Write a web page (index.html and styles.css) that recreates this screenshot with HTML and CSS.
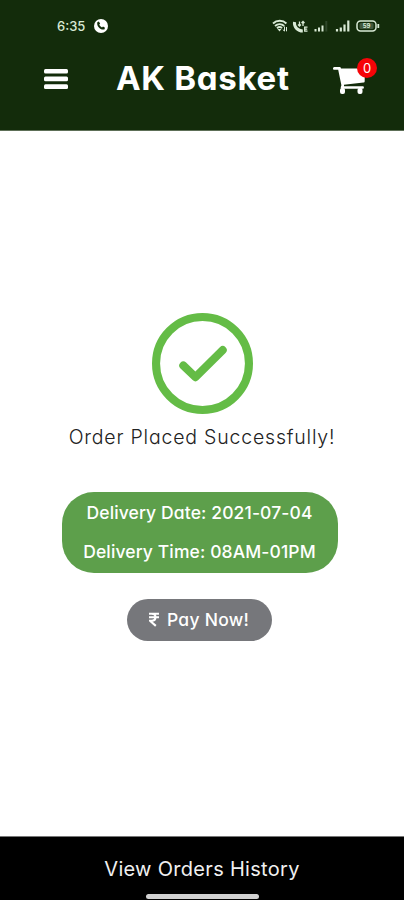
FILE: index.html
```
<!DOCTYPE html>
<html lang="en">

<head>
    <meta charset="utf-8">
    <meta name="viewport" content="width=device-width, initial-scale=1">
    <title>AK Basket</title>
    <link rel="stylesheet" href="styles.css">
</head>

<body>

    <header class="header">
        <div class="status-bar">
            <span class="clock">6:35</span>
            <svg class="call-icon" viewBox="0 0 14 14">
                <circle cx="7" cy="7" r="7" fill="#fff"/>
                <path d="M3.3 3.2l1.5-.6 1.3 2-.9 1.1c.6 1.2 1.5 2.1 2.8 2.7l1-.9 2 1.3-.6 1.6c-3.6 1.1-8-3.200-7.100-7.200z" fill="#132c0b"/>
            </svg>
            <svg class="status-icons" viewBox="0 0 108 16" fill="none" stroke="#d9ead6">
                <path d="M1 5.500c3.800-3.600 9.800-3.600 13.400 0M3 8c2.800-2.400 6.600-2.400 9.200 0M5 10.200c1.600-1.400 3.600-1.400 5 0" stroke-width="1.900"/>
                <path d="M5.500 11h4L7.500 13.500z" fill="#d9ead6" stroke="none"/>
                <path d="M12.500 8.500v4.500M10.800 11.500l1.700 1.700M14.500 13.300V9" stroke-width="1"/>
                <path d="M22.500 4c-.6 5 3.200 9 8.300 9" stroke-width="3"/>
                <path d="M27.500 3.500v4.500M31 8V3.500M26 6.500L27.500 8 29 6.500M29.500 5L31 3.500 32.500 5" stroke-width="1.300"/>
                <path d="M35.500 9.200h-2.800v4h2.800M32.700 11.200h2.500" stroke-width="1.300"/>
                <path d="M43.500 11v2.500M47 9.500v4M50.500 7.500v6" stroke-width="2"/>
                <path d="M54.300 3v10.500" stroke-width="2" stroke="#2f472a"/>
                <path d="M65 11v2.500M68.800 9.500v4M72.500 6.500v7M76.300 2.500v11" stroke-width="2.200"/>
                <rect x="85" y="3" width="19" height="10" rx="3.500" stroke-width="1.500"/>
                <path d="M106.300 6v4" stroke-width="1.800"/>
                <rect x="87.500" y="5" width="14" height="6" rx="1.500" fill="#42593e" stroke="none"/>
                <text class="battery-level" x="94.500" y="10.200">59</text>
            </svg>
        </div>

        <div class="nav">
            <svg class="menu-icon" viewBox="0 0 24 22" fill="#fff">
                <rect width="24" height="4.600" y="0.900" rx="1.500"/>
                <rect width="24" height="4.600" y="8.600" rx="1.500"/>
                <rect width="24" height="4.600" y="16.300" rx="1.500"/>
            </svg>
            <h1 class="brand">AK Basket</h1>
            <div class="cart">
                <svg class="cart-icon" viewBox="0 0 34 28" fill="#fff">
                    <path d="M1.300 0h5.200c1 0 1.400.7 1.500 1.600H30.500c.8 0 1.200.6 1.200 1.300v11.300c0 .8-.5 1.300-1.200 1.400L10.900 17.800l.2 1.400h18.500c.8 0 1.300.5 1.300 1.300s-.5 1.300-1.300 1.300H8.900c-.8 0-1.300-.7-1.200-1.500l.7-2L5.200 2.700H1.300C.5 2.700 0 2 0 1.400S.5 0 1.300 0z"/>
                    <rect x="7" y="21" width="5" height="6" rx="2"/>
                    <rect x="24.500" y="21" width="5" height="6" rx="2"/>
                </svg>
                <span class="badge">0</span>
            </div>
        </div>
    </header>

    <main class="content">
        <svg class="success-icon" viewBox="0 0 100 100" fill="none" stroke="#64bc46">
            <circle cx="50" cy="50" r="46" stroke-width="8"/>
            <path d="M31 52l12 11.500L70 36.700" stroke-width="8" stroke-linecap="round" stroke-linejoin="round"/>
        </svg>
        <p class="message">Order Placed Successfully!</p>

        <div class="delivery">
            <p class="delivery-date">Delivery Date: 2021-07-04</p>
            <p class="delivery-time">Delivery Time: 08AM-01PM</p>
        </div>

        <button class="pay-button">
            <svg class="rupee-icon" viewBox="0 0 11 15" fill="none" stroke="#fff" stroke-width="2.300">
                <path d="M0 1.200h11M0 5h11M0 1.200h3c5.500 0 5.500 7.600 0 7.600H1L7.500 14.500"/>
            </svg>
            <span class="pay-label">Pay Now!</span>
        </button>
    </main>

    <footer class="footer">
        <a class="history-link">View Orders History</a>
        <div class="home-bar"></div>
    </footer>

</body>

</html>
```

FILE: styles.css
```
* {
    box-sizing: border-box;
}

body {
    display: flex;
    flex-direction: column;
    height: 900px;
    margin: 0;
    background-color: #fff;
    font-family: Inter, "Open Sans", sans-serif;
    font-feature-settings: "cv11";
}

h1,
p {
    margin: 0;
    white-space: nowrap;
}

.header {
    height: 131px;
    padding-top: 18px;
    background-color: #132c0b;
    border-bottom: 1px solid #5d6f57;
    color: #fff;
}

.status-bar {
    display: flex;
    align-items: center;
    height: 16px;
    padding: 0 24px 0 57px;
}

.clock {
    width: 37px;
    font-size: 13px;
    font-weight: 500;
    color: #d9ead6;
}

.call-icon {
    width: 14px;
    height: 14px;
}

.status-icons {
    width: 108px;
    height: 16px;
    margin-left: auto;
}

.battery-level {
    font-size: 6px;
    font-weight: 700;
    text-anchor: middle;
    fill: #d9ead6;
    stroke: none;
}

.nav {
    display: flex;
    align-items: center;
    height: 90px;
    padding: 0 37px 0 44px;
}

.menu-icon {
    width: 24px;
    height: 22px;
}

.brand {
    width: 173px;
    margin: 0 0 2px 48px;
    font-size: 33px;
    font-weight: 700;
    line-height: 40px;
    letter-spacing: 0.7px;
}

.cart {
    position: relative;
    height: 28px;
    margin: 3px 0 0 auto;
}

.cart-icon {
    display: block;
    width: 34px;
    height: 28px;
}

.badge {
    position: absolute;
    top: -9px;
    right: -10px;
    width: 20px;
    height: 20px;
    border-radius: 50%;
    background-color: #f60408;
    font-size: 13px;
    line-height: 20px;
    text-align: center;
}

.content {
    display: flex;
    flex: 1;
    flex-direction: column;
    align-items: center;
    padding-top: 182px;
}

.success-icon {
    width: 101px;
    height: 101px;
}

.message {
    margin-top: 8px;
    font-size: 19.5px;
    font-weight: 300;
    line-height: 30px;
    letter-spacing: 0.8px;
    color: #222;
}

.delivery {
    width: 276px;
    height: 81px;
    margin: 40px 5px 0 0;
    padding-top: 1px;
    border-radius: 32px;
    background-color: #5d9f4b;
    font-size: 17.5px;
    font-weight: 500;
    line-height: 39px;
    letter-spacing: 0.12px;
    text-align: center;
    color: #fff;
}

.pay-button {
    display: flex;
    align-items: center;
    width: 145px;
    height: 42px;
    margin: 26px 5px 0 0;
    padding: 0 0 2px 22px;
    border: 0;
    border-radius: 21px;
    background-color: #76777b;
    font: inherit;
    font-size: 17.5px;
    font-weight: 500;
    letter-spacing: 0.25px;
    color: #fff;
}

.rupee-icon {
    width: 10px;
    height: 15px;
    margin-right: 8px;
}

.footer {
    display: flex;
    flex-direction: column;
    align-items: center;
    height: 64px;
    padding-top: 18px;
    background-color: #000;
    border-top: 1px solid #777;
}

.history-link {
    font-size: 20px;
    line-height: 28px;
    letter-spacing: 0.3px;
    white-space: nowrap;
    color: #f0f0f0;
}

.home-bar {
    width: 113px;
    height: 5px;
    margin-top: 11px;
    border-radius: 3px;
    background-color: #d2d2d2;
}
```
